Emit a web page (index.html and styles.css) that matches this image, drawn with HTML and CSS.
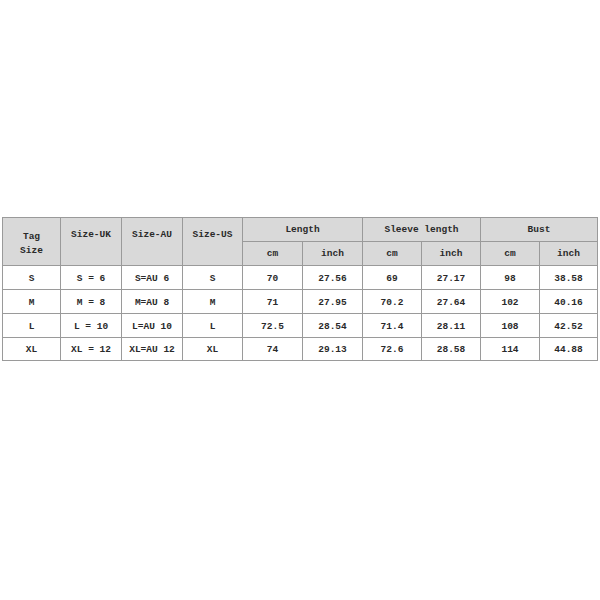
FILE: index.html
```html
<!DOCTYPE html>
<html>
<head>
<meta charset="utf-8">
<link rel="stylesheet" href="styles.css">
</head>
<body>
<div class="page">
<table class="sizes">
  <colgroup>
    <col class="c58"><col class="c61"><col class="c61"><col class="c60"><col class="c60"><col class="c60"><col class="c59"><col class="c59"><col class="c59"><col class="c58">
  </colgroup>
  <thead>
    <tr>
      <th rowspan="2" class="tag">Tag<br>Size</th>
      <th rowspan="2" class="top">Size-UK</th>
      <th rowspan="2" class="top">Size-AU</th>
      <th rowspan="2" class="top">Size-US</th>
      <th colspan="2">Length</th>
      <th colspan="2">Sleeve length</th>
      <th colspan="2">Bust</th>
    </tr>
    <tr>
      <th>cm</th><th>inch</th><th>cm</th><th>inch</th><th>cm</th><th>inch</th>
    </tr>
  </thead>
  <tbody>
    <tr><td>S</td><td>S = 6</td><td>S=AU 6</td><td>S</td><td>70</td><td>27.56</td><td>69</td><td>27.17</td><td>98</td><td>38.58</td></tr>
    <tr><td>M</td><td>M = 8</td><td>M=AU 8</td><td>M</td><td>71</td><td>27.95</td><td>70.2</td><td>27.64</td><td>102</td><td>40.16</td></tr>
    <tr><td>L</td><td>L = 10</td><td>L=AU 10</td><td>L</td><td>72.5</td><td>28.54</td><td>71.4</td><td>28.11</td><td>108</td><td>42.52</td></tr>
    <tr class="last"><td>XL</td><td>XL = 12</td><td>XL=AU 12</td><td>XL</td><td>74</td><td>29.13</td><td>72.6</td><td>28.58</td><td>114</td><td>44.88</td></tr>
  </tbody>
</table>
</div>
</body>
</html>
```

FILE: styles.css
```css
html, body {
  margin: 0;
  padding: 0;
  background: #ffffff;
}
.page {
  width: 600px;
  height: 600px;
  padding: 217px 2px 0 2px;
  box-sizing: border-box;
}
.sizes {
  border-collapse: collapse;
  table-layout: fixed;
  width: 596px;
  font-family: "Liberation Mono", "DejaVu Sans Mono", monospace;
  font-weight: bold;
  font-size: 9.5px;
  color: #2a2a2a;
}
.c58 { width: 58px; }
.c59 { width: 59px; }
.c60 { width: 60px; }
.c61 { width: 61px; }
.sizes th,
.sizes td {
  border: 1px solid #9a9a9a;
  text-align: center;
  vertical-align: middle;
  padding: 0;
  height: 23px;
  line-height: 14px;
}
.sizes th {
  background: #d9d9d9;
  font-weight: bold;
}
.sizes th.top {
  vertical-align: top;
  padding-top: 10px;
}
.sizes th.tag {
  padding-top: 4px;
}
.sizes td {
  background: #ffffff;
  padding-top: 2px;
  height: 21px;
}
.sizes tr.last td {
  height: 20px;
}
```
